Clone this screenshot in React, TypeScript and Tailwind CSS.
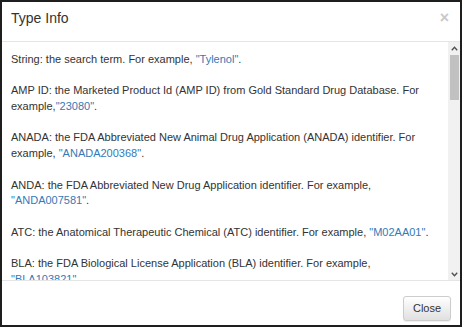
import { FC } from 'react'

type Entry = {
  text: string
  example: string
  space: boolean
  breakBefore?: boolean
}

const entries: Entry[] = [
  { text: 'String: the search term. For example,', example: '"Tylenol"', space: true },
  {
    text: 'AMP ID: the Marketed Product Id (AMP ID) from Gold Standard Drug Database. For example,',
    example: '"23080"',
    space: false,
  },
  {
    text: 'ANADA: the FDA Abbreviated New Animal Drug Application (ANADA) identifier. For example,',
    example: '"ANADA200368"',
    space: true,
  },
  {
    text: 'ANDA: the FDA Abbreviated New Drug Application identifier. For example,',
    example: '"ANDA007581"',
    space: true,
    breakBefore: true,
  },
  {
    text: 'ATC: the Anatomical Therapeutic Chemical (ATC) identifier. For example,',
    example: '"M02AA01"',
    space: true,
  },
  {
    text: 'BLA: the FDA Biological License Application (BLA) identifier. For example,',
    example: '"BLA103821"',
    space: true,
  },
  {
    text: 'BN: the Brand Name of a drug product. For example,',
    example: '"Advil"',
    space: true,
  },
]

const Chevron: FC<{ up?: boolean }> = ({ up }) => (
  <svg width="7" height="5" viewBox="0 0 7 5" className={up ? '' : 'rotate-180'}>
    <path d="M0.8 4.2 L3.5 1.3 L6.2 4.2" fill="none" stroke="#505050" strokeWidth="1.4" />
  </svg>
)

const App: FC = () => {
  return (
    <div
      className="flex h-[327px] w-[462px] flex-col border-2 border-[#1e1e1e] bg-white text-[#333]"
      style={{ fontFamily: '"Liberation Sans", Arial, sans-serif' }}
    >
      <div className="flex h-[40px] shrink-0 items-start justify-between border-b border-[#e5e5e5] pl-[9px] pr-[11px] pt-[7px]">
        <h4 className="text-[14px] leading-[18px]">Type Info</h4>
        <span className="mt-[1px] text-[16px] font-bold leading-[16px] text-[#c9c9c9]">×</span>
      </div>

      <div className="flex h-[238px] shrink-0">
        <div className="flex-1 overflow-hidden pl-[9px] pt-[10px] text-[11px] leading-[15.7px]">
          <div className="w-[424px]">
            {entries.map((e) => (
              <p key={e.example} className="mb-[15.7px]">
                {e.text}
                {e.breakBefore ? <br /> : e.space ? ' ' : ''}
                <a href="#" className="text-[#337ab7]">
                  {e.example}
                </a>
                .
              </p>
            ))}
          </div>
        </div>
        <div className="flex w-[12px] shrink-0 flex-col items-center bg-[#f1f1f1]">
          <div className="flex h-[12px] items-center justify-center">
            <Chevron up />
          </div>
          <div className="mt-[1px] h-[45px] w-[9px] bg-[#c1c1c1]" />
          <div className="flex-1" />
          <div className="flex h-[12px] items-center justify-center">
            <Chevron />
          </div>
        </div>
      </div>

      <div className="flex flex-1 items-start justify-end border-t border-[#e5e5e5] pr-[9px] pt-[15px]">
        <button className="h-[25px] w-[48px] rounded-[3px] border border-[#ccc] bg-gradient-to-b from-white to-[#e0e0e0] text-[11px] text-[#333] shadow-[0_1px_1px_rgba(0,0,0,0.075)]">
          Close
        </button>
      </div>
    </div>
  )
}

export default App
